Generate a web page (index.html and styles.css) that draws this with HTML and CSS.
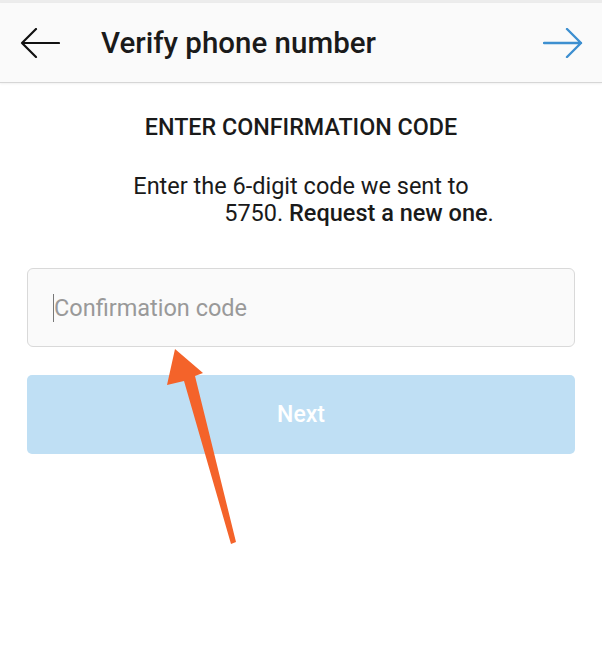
FILE: index.html
```html
<!DOCTYPE html>
<html>
<head>
<meta charset="utf-8">
<link rel="stylesheet" href="styles.css">
</head>
<body>
<div class="topstrip"></div>
<header class="appbar">
  <svg class="icon back" width="40" height="30" viewBox="0 0 40 30">
    <path d="M39 15 H2 M16 1 L2 15 L16 29" fill="none" stroke="#111" stroke-width="2.2" stroke-linecap="round" stroke-linejoin="round"/>
  </svg>
  <h1 class="title">Verify phone number</h1>
  <svg class="icon fwd" width="40" height="30" viewBox="0 0 40 30">
    <path d="M1 15 H38 M24 1 L38 15 L24 29" fill="none" stroke="#3d8fd0" stroke-width="2.4" stroke-linecap="round" stroke-linejoin="round"/>
  </svg>
</header>
<main class="content">
  <h2 class="heading">ENTER CONFIRMATION CODE</h2>
  <p class="desc">Enter the 6-digit code we sent to<br><span class="hidden">+1 555 45</span>5750. <b>Request a new one</b>.</p>
  <div class="field"><span class="caret"></span><span class="placeholder">Confirmation code</span></div>
  <div class="btn">Next</div>
</main>
<svg class="annot" width="602" height="653" viewBox="0 0 602 653">
  <polygon points="175,349 203,373 195,376 236,542 231,544 184,381 167,385" fill="#f4632a"/>
</svg>
</body>
</html>
```
FILE: styles.css
```css
html, body {
  margin: 0;
  padding: 0;
  background: #fff;
  font-family: Roboto, "Noto Sans", sans-serif;
  color: #111;
}
body {
  width: 602px;
  height: 653px;
  position: relative;
  overflow: hidden;
}
.topstrip {
  height: 3px;
  background: #ececec;
}
.appbar {
  height: 79px;
  background: #fafafa;
  border-bottom: 1px solid #d6d6d6;
  box-shadow: 0 1px 2px rgba(0,0,0,0.06);
  display: flex;
  align-items: center;
  padding: 0 19px 0 20px;
}
.icon { display: block; flex: none; }
.back { margin-right: 41px; }
.title {
  margin: 0;
  flex: 1;
  font-size: 29.5px;
  font-weight: 500;
  color: #1a1a1a;
  letter-spacing: 0;
}
.content {
  padding: 0 27px;
  text-align: center;
}
.heading {
  margin: 31px 0 0;
  font-size: 23.3px;
  font-weight: 500;
  line-height: 26px;
  color: #1a1a1a;
}
.desc {
  margin: 33px 0 0;
  font-size: 23.5px;
  line-height: 27px;
  color: #1a1a1a;
}
.desc b { font-weight: 500; }
.hidden {
  display: inline-block;
  width: 116px;
  overflow: hidden;
  white-space: nowrap;
  vertical-align: top;
  color: #fff;
}
.field {
  margin-top: 41px;
  height: 77px;
  border: 1px solid #d9d9d9;
  border-radius: 6px;
  background: #fafafa;
  display: flex;
  align-items: center;
  padding-left: 25px;
  text-align: left;
}
.caret {
  width: 1px;
  height: 28px;
  background: #777;
}
.placeholder {
  font-size: 23.5px;
  color: #999;
}
.btn {
  margin-top: 28px;
  height: 79px;
  border-radius: 5px;
  background: #bfdff4;
  color: #fff;
  font-size: 23px;
  font-weight: 500;
  display: flex;
  align-items: center;
  justify-content: center;
}
.annot {
  position: absolute;
  left: 0;
  top: 0;
  pointer-events: none;
}
```
